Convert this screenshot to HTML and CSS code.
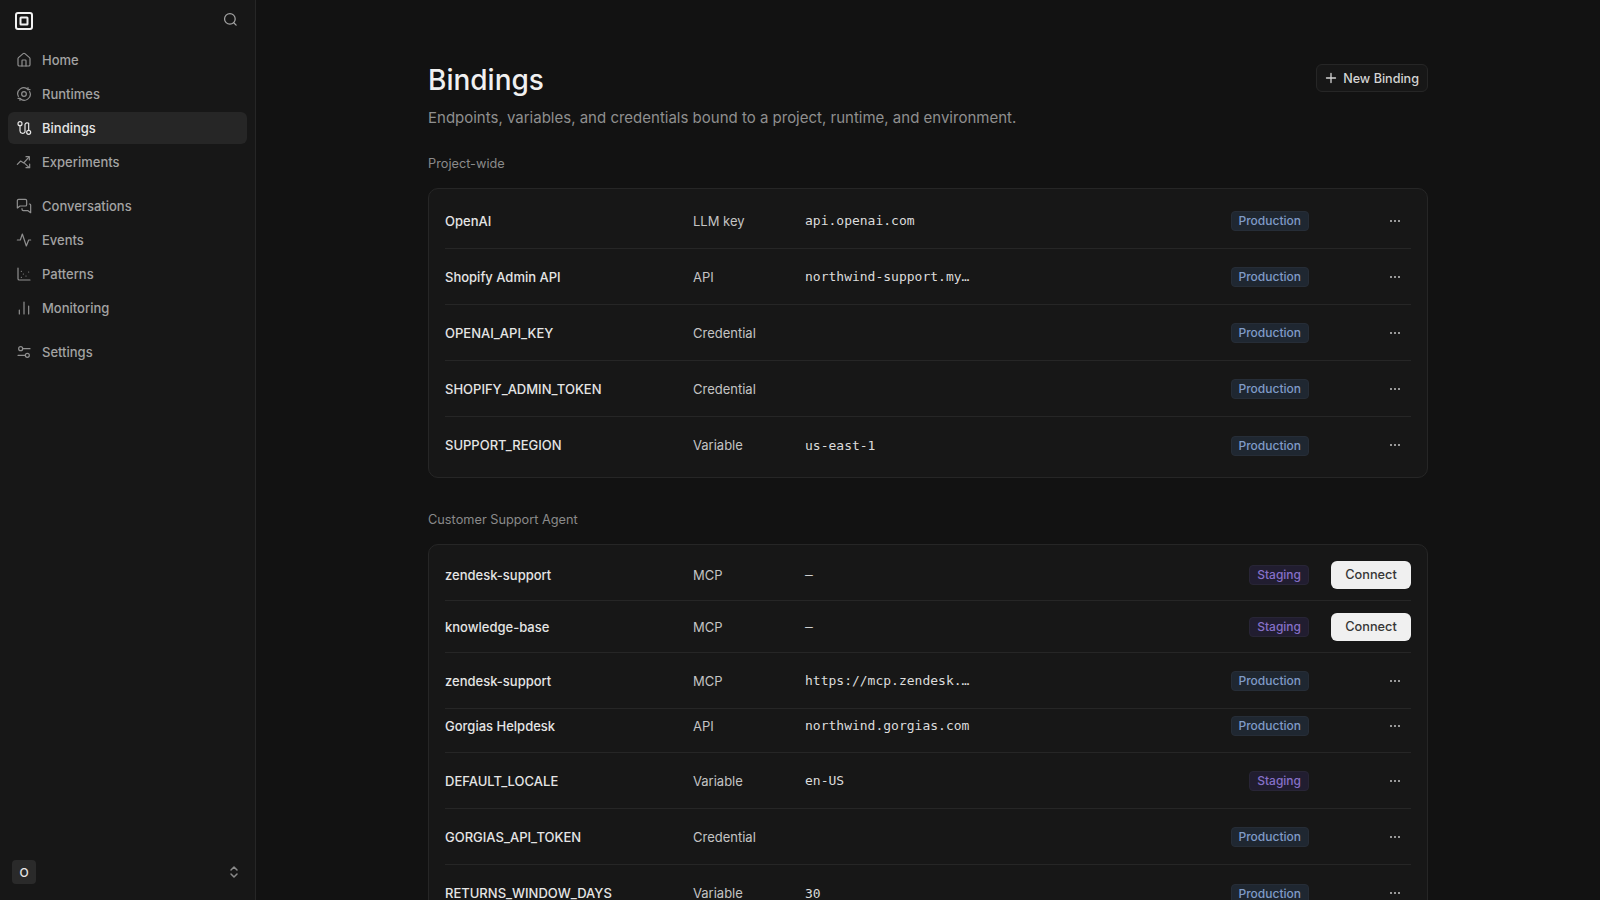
FILE: index.html
```html
<!DOCTYPE html>
<html lang="en">
<head>
    <meta charset="UTF-8">
    <title>Bindings</title>
    <link rel="stylesheet" href="styles.css">
</head>
<body>
    <div class="app">
        <aside class="sidebar">
            <div class="side-top">
                <svg class="logo" width="18" height="18" viewBox="0 0 18 18" fill="none" stroke="#f2f2f2" stroke-width="2"><rect x="1" y="1" width="16" height="16" rx="2"/><rect x="5.5" y="5.5" width="7" height="7" rx="0.5"/></svg>
                <svg class="search" width="15" height="15" viewBox="0 0 24 24" fill="none" stroke="#a3a3a3" stroke-width="2" stroke-linecap="round"><circle cx="11" cy="11" r="8.5"/><path d="m21 21-3.8-3.8"/></svg>
            </div>
            <nav class="nav-group">
                <a class="nav-item"><svg class="nav-icon" viewBox="0 0 24 24"><path d="M15 21v-8a1 1 0 0 0-1-1h-4a1 1 0 0 0-1 1v8"/><path d="M3 10a2 2 0 0 1 .7-1.5l7-6a2 2 0 0 1 2.6 0l7 6a2 2 0 0 1 .7 1.5v9a2 2 0 0 1-2 2H5a2 2 0 0 1-2-2z"/></svg>Home</a>
                <a class="nav-item"><svg class="nav-icon" viewBox="0 0 24 24"><circle cx="12" cy="12" r="3.500"/><path d="M20.500 8.500a9 9 0 0 1-14.500 10.200"/><path d="M3.500 15.500a9 9 0 0 1 14.500-10.200"/><path d="M18 2.500v3h3M6 21.500v-3H3"/></svg>Runtimes</a>
                <a class="nav-item active"><svg class="nav-icon" viewBox="0 0 24 24"><circle cx="6" cy="5.500" r="3"/><circle cx="19" cy="18.500" r="3"/><path d="M6 8.500V16a4 4 0 0 0 7.500 2V6.500a3.500 3.500 0 0 1 5.500-1.500v10.500"/></svg>Bindings</a>
                <a class="nav-item"><svg class="nav-icon" viewBox="0 0 24 24"><path d="M2 15.500l5-5 4.500 3L19 5"/><path d="M15 4h5v5"/><path d="M13 14l6.500 6"/><path d="M20.500 15v5.500H15"/></svg>Experiments</a>
            </nav>
            <nav class="nav-group">
                <a class="nav-item"><svg class="nav-icon" viewBox="0 0 24 24"><path d="M16 10a2 2 0 0 1-2 2H6l-4 3V4a2 2 0 0 1 2-2h10a2 2 0 0 1 2 2z"/><path d="M20 9h.5a1.500 1.500 0 0 1 1.500 1.500V22l-4-3h-7a2 2 0 0 1-2-2v-1"/></svg>Conversations</a>
                <a class="nav-item"><svg class="nav-icon" viewBox="0 0 24 24"><path d="M22 12h-3l-3.500 9-6-18-3 9H2"/></svg>Events</a>
                <a class="nav-item"><svg class="nav-icon" viewBox="0 0 24 24"><path d="M3 3v16a2 2 0 0 0 2 2h16"/><path d="M8 17h.01M11 12h.01M15 15h.01M19 9h.01M8 8h.01"/></svg>Patterns</a>
                <a class="nav-item"><svg class="nav-icon" viewBox="0 0 24 24"><path d="M5 21v-6M12 21V3M19 21V9"/></svg>Monitoring</a>
            </nav>
            <nav class="nav-group">
                <a class="nav-item"><svg class="nav-icon" viewBox="0 0 24 24"><path d="M14 17H3M21 7h-11"/><circle cx="17" cy="17" r="3"/><circle cx="7" cy="7" r="3"/></svg>Settings</a>
            </nav>
            <div class="side-foot">
                <span class="avatar">O</span>
                <svg width="10" height="14" viewBox="0 0 10 14" fill="none" stroke="#8a8a8a" stroke-width="1.500" stroke-linecap="round" stroke-linejoin="round"><path d="M2 5l3-3 3 3M2 9l3 3 3-3"/></svg>
            </div>
        </aside>

        <main class="main">
            <div class="content">
                <header class="page-head">
                    <div>
                        <h1>Bindings</h1>
                        <p class="subtitle">Endpoints, variables, and credentials bound to a project, runtime, and environment.</p>
                    </div>
                    <button class="new-btn"><svg width="12" height="12" viewBox="0 0 12 12" fill="none" stroke="#d4d4d4" stroke-width="1.300" stroke-linecap="round"><path d="M6 1.500v9M1.500 6h9"/></svg>New Binding</button>
                </header>

                <h2 class="section-title">Project-wide</h2>
                <section class="card">
                    <div class="row"><span class="name">OpenAI</span><span class="type">LLM key</span><span class="value">api.openai.com</span><span class="badge prod">Production</span><span class="more"><i></i><i></i><i></i></span></div>
                    <div class="row"><span class="name">Shopify Admin API</span><span class="type">API</span><span class="value">northwind-support.my…</span><span class="badge prod">Production</span><span class="more"><i></i><i></i><i></i></span></div>
                    <div class="row"><span class="name">OPENAI_API_KEY</span><span class="type">Credential</span><span class="value"></span><span class="badge prod">Production</span><span class="more"><i></i><i></i><i></i></span></div>
                    <div class="row"><span class="name">SHOPIFY_ADMIN_TOKEN</span><span class="type">Credential</span><span class="value"></span><span class="badge prod">Production</span><span class="more"><i></i><i></i><i></i></span></div>
                    <div class="row"><span class="name">SUPPORT_REGION</span><span class="type">Variable</span><span class="value">us-east-1</span><span class="badge prod">Production</span><span class="more"><i></i><i></i><i></i></span></div>
                </section>

                <h2 class="section-title second">Customer Support Agent</h2>
                <section class="card">
                    <div class="row row-connect"><span class="name">zendesk-support</span><span class="type">MCP</span><span class="value">—</span><span class="badge stag">Staging</span><button class="connect">Connect</button></div>
                    <div class="row row-connect"><span class="name">knowledge-base</span><span class="type">MCP</span><span class="value">—</span><span class="badge stag">Staging</span><button class="connect">Connect</button></div>
                    <div class="row"><span class="name">zendesk-support</span><span class="type">MCP</span><span class="value">https://mcp.zendesk.…</span><span class="badge prod">Production</span><span class="more"><i></i><i></i><i></i></span></div>
                    <div class="row row-short"><span class="name">Gorgias Helpdesk</span><span class="type">API</span><span class="value">northwind.gorgias.com</span><span class="badge prod">Production</span><span class="more"><i></i><i></i><i></i></span></div>
                    <div class="row"><span class="name">DEFAULT_LOCALE</span><span class="type">Variable</span><span class="value">en-US</span><span class="badge stag">Staging</span><span class="more"><i></i><i></i><i></i></span></div>
                    <div class="row"><span class="name">GORGIAS_API_TOKEN</span><span class="type">Credential</span><span class="value"></span><span class="badge prod">Production</span><span class="more"><i></i><i></i><i></i></span></div>
                    <div class="row"><span class="name">RETURNS_WINDOW_DAYS</span><span class="type">Variable</span><span class="value">30</span><span class="badge prod">Production</span><span class="more"><i></i><i></i><i></i></span></div>
                </section>
            </div>
        </main>
    </div>
</body>
</html>
```

FILE: styles.css
```css
* {
    box-sizing: border-box;
}
html, body {
    height: 100%;
    margin: 0;
    overflow: hidden;
}
body {
    background: #121212;
    color: #e5e5e5;
    font-family: Inter, "Liberation Sans", sans-serif;
    font-size: 13px;
}
.app {
    display: flex;
    height: 900px;
}
.sidebar {
    width: 256px;
    flex-shrink: 0;
    display: flex;
    flex-direction: column;
    padding: 0 8px;
    background: #171717;
    border-right: 1px solid #262626;
}
.side-top {
    display: flex;
    align-items: center;
    justify-content: space-between;
    height: 41px;
    padding: 0 9px 0 7px;
    margin-bottom: 3px;
}
.search {
    margin-bottom: 2px;
}
.nav-group {
    display: flex;
    flex-direction: column;
    gap: 2px;
    margin-bottom: 12px;
}
.nav-item {
    display: flex;
    align-items: center;
    gap: 10px;
    height: 32px;
    padding: 0 8px;
    border-radius: 6px;
    color: #a3a3a3;
    font-weight: 500;
    font-size: 13px;
}
.nav-item.active {
    background: #262626;
    color: #e5e5e5;
}
.nav-icon {
    width: 16px;
    height: 16px;
    fill: none;
    stroke: #8f8f8f;
    stroke-width: 1.800;
    stroke-linecap: round;
    stroke-linejoin: round;
}
.active .nav-icon {
    stroke: #e5e5e5;
}
.side-foot {
    margin-top: auto;
    display: flex;
    align-items: center;
    justify-content: space-between;
    height: 24px;
    margin-bottom: 16px;
    padding: 0 8px 0 4px;
}
.avatar {
    width: 24px;
    height: 24px;
    border-radius: 4px;
    background: #2a2a2a;
    color: #e5e5e5;
    font-size: 12px;
    font-weight: 500;
    display: flex;
    align-items: center;
    justify-content: center;
}
.main {
    flex: 1;
    overflow: hidden;
}
.content {
    width: 1000px;
    margin-left: 172px;
    padding-top: 64px;
}
.page-head {
    display: flex;
    justify-content: space-between;
    align-items: flex-start;
    margin-bottom: 24px;
}
h1 {
    margin: 0 0 10px;
    font-size: 28px;
    line-height: 32px;
    font-weight: 500;
    color: #f0f0f0;
}
.subtitle {
    margin: 0;
    font-size: 15px;
    line-height: 24px;
    color: #8f8f8f;
}
.new-btn {
    display: flex;
    align-items: center;
    gap: 6px;
    height: 28px;
    padding: 0 8px;
    background: #171717;
    border: 1px solid #262626;
    border-radius: 6px;
    color: #d4d4d4;
    font: 500 12.600px Inter, sans-serif;
}
.section-title {
    margin: 0 0 14px;
    font-size: 12.750px;
    line-height: 20px;
    font-weight: 400;
    color: #8a8a8a;
}
.section-title.second {
    margin-top: 32px;
}
.card {
    background: #171717;
    border: 1px solid #262626;
    border-radius: 10px;
    padding: 4px 16px;
}
.row {
    display: grid;
    grid-template-columns: 248px 112px 1fr auto 102px;
    align-items: center;
    height: 56px;
    border-bottom: 1px solid #262626;
}
.row:last-child {
    border-bottom: none;
}
.row-connect {
    height: 52px;
}
.row-short {
    height: 44px;
    padding-bottom: 10px;
}
.name {
    font-weight: 500;
    color: #e5e5e5;
}
.type {
    color: #c4c4c4;
}
.value {
    font-family: "DejaVu Sans Mono", monospace;
    font-size: 13px;
    color: #dcdcdc;
}
.badge {
    justify-self: end;
    height: 20px;
    margin-top: 1px;
    padding: 0 7px;
    border-radius: 4px;
    border: 1px solid;
    font-size: 12px;
    font-weight: 500;
    line-height: 18px;
}
.badge.prod {
    background: #1f2731;
    border-color: #262d37;
    color: #7f9bc8;
}
.badge.stag {
    background: #211d30;
    border-color: #282536;
    color: #8670c8;
}
.more {
    justify-self: end;
    display: flex;
    gap: 2px;
    width: 32px;
    justify-content: center;
}
.more i {
    width: 2px;
    height: 2px;
    border-radius: 50%;
    background: #c4c4c4;
}
.connect {
    justify-self: end;
    width: 80px;
    height: 28px;
    border: none;
    border-radius: 6px;
    background: #f0f0f0;
    color: #363636;
    font: 500 12.750px Inter, sans-serif;
}
```
